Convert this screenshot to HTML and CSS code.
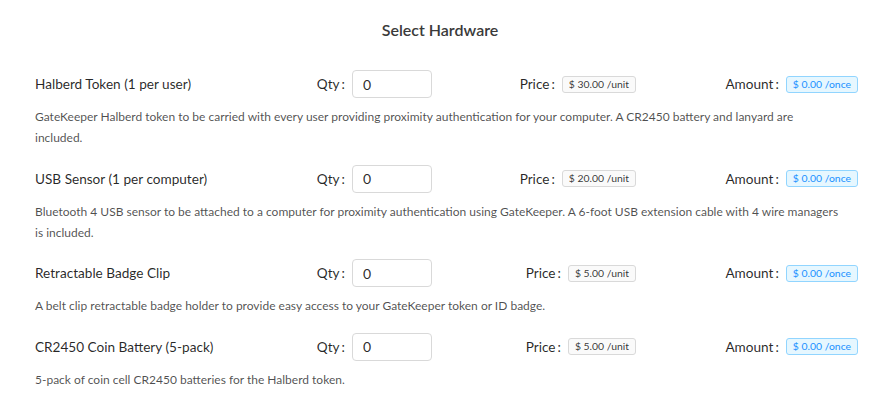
FILE: index.html
```html
<!DOCTYPE html>
<html>
<head>
    <title>Select Hardware</title>
    <link rel="stylesheet" href="styles.css">
</head>
<body>
    <h2 class="title">Select Hardware</h2>

    <div class="hardware">
        <div class="item">
            <div class="item-row">
                <div class="item-name">Halberd Token (1 per user)</div>
                <div class="field">
                    <span class="label">Qty<span class="colon">:</span></span>
                    <input class="qty" type="text" value="0">
                </div>
                <div class="field">
                    <span class="label">Price<span class="colon">:</span></span>
                    <span class="tag">$ 30.00 /unit</span>
                </div>
                <div class="field">
                    <span class="label">Amount<span class="colon">:</span></span>
                    <span class="tag tag-blue">$ 0.00 /once</span>
                </div>
            </div>
            <div class="item-desc">GateKeeper Halberd token to be carried with every user providing proximity authentication for your computer. A CR2450 battery and lanyard are included.</div>
        </div>

        <div class="item">
            <div class="item-row">
                <div class="item-name">USB Sensor (1 per computer)</div>
                <div class="field">
                    <span class="label">Qty<span class="colon">:</span></span>
                    <input class="qty" type="text" value="0">
                </div>
                <div class="field">
                    <span class="label">Price<span class="colon">:</span></span>
                    <span class="tag">$ 20.00 /unit</span>
                </div>
                <div class="field">
                    <span class="label">Amount<span class="colon">:</span></span>
                    <span class="tag tag-blue">$ 0.00 /once</span>
                </div>
            </div>
            <div class="item-desc">Bluetooth 4 USB sensor to be attached to a computer for proximity authentication using GateKeeper. A 6-foot USB extension cable with 4 wire managers is included.</div>
        </div>

        <div class="item">
            <div class="item-row">
                <div class="item-name">Retractable Badge Clip</div>
                <div class="field">
                    <span class="label">Qty<span class="colon">:</span></span>
                    <input class="qty" type="text" value="0">
                </div>
                <div class="field">
                    <span class="label">Price<span class="colon">:</span></span>
                    <span class="tag">$ 5.00 /unit</span>
                </div>
                <div class="field">
                    <span class="label">Amount<span class="colon">:</span></span>
                    <span class="tag tag-blue">$ 0.00 /once</span>
                </div>
            </div>
            <div class="item-desc">A belt clip retractable badge holder to provide easy access to your GateKeeper token or ID badge.</div>
        </div>

        <div class="item">
            <div class="item-row">
                <div class="item-name">CR2450 Coin Battery (5-pack)</div>
                <div class="field">
                    <span class="label">Qty<span class="colon">:</span></span>
                    <input class="qty" type="text" value="0">
                </div>
                <div class="field">
                    <span class="label">Price<span class="colon">:</span></span>
                    <span class="tag">$ 5.00 /unit</span>
                </div>
                <div class="field">
                    <span class="label">Amount<span class="colon">:</span></span>
                    <span class="tag tag-blue">$ 0.00 /once</span>
                </div>
            </div>
            <div class="item-desc">5-pack of coin cell CR2450 batteries for the Halberd token.</div>
        </div>
    </div>
</body>
</html>
```

FILE: styles.css
```css
* {
    box-sizing: border-box;
}

body {
    margin:0;
    background:#fff;
    font-family:"Lato", "Open Sans", sans-serif;
    color:rgba(0, 0, 0, 0.85);
}

.title {
    margin:0;
    padding:20px 8px 0 0;
    height:70px;
    text-align:center;
    font-size:16px;
    font-weight:600;
    color:#3a3a3a;
}

.hardware {
    padding:0 30px 0 35px;
}

.item {
    margin-bottom:16.5px;
}

.item-row {
    display:grid;
    grid-template-columns: 1fr 200px 204px 222px;
    align-items:center;
    height:28px;
}

.item-name {
    font-size:13.6px;
}

.field {
    display:flex;
    justify-content:flex-end;
    align-items:center;
}

.label {
    font-size:13.6px;
    margin-right:7px;
}

.colon {
    margin-left:2px;
}

.qty {
    width:80px;
    height:28px;
    padding:0 10px;
    border:1px solid #d9d9d9;
    border-radius:4px;
    font-family:inherit;
    font-size:14px;
    color:rgba(0, 0, 0, 0.85);
    outline:none;
}

.tag {
    display:inline-block;
    height:17px;
    line-height:15px;
    padding:0 6px;
    border:1px solid #d9d9d9;
    border-radius:3px;
    background:#fafafa;
    font-size:10.4px;
    color:rgba(0, 0, 0, 0.8);
}

.tag-blue {
    background:#e6f7ff;
    border-color:#91d5ff;
    color:#1890ff;
}

.item-desc {
    max-width:808px;
    margin-top:8px;
    font-size:12px;
    line-height:21px;
    color:rgba(0, 0, 0, 0.7);
}
```
